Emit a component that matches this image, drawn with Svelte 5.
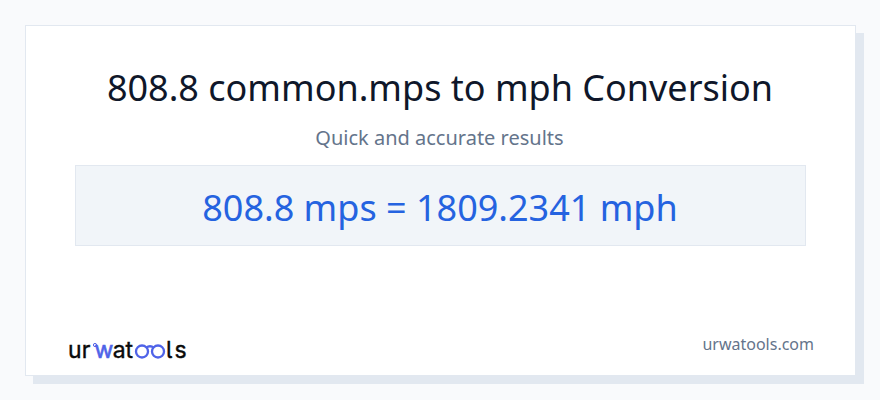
<script>
    export let title = "808.8 common.mps to mph Conversion";
    export let subtitle = "Quick and accurate results";
    export let result = "808.8 mps = 1809.2341 mph";
    export let site = "urwatools.com";
</script>

<div class="page">
    <main class="card">
        <h1>{title}</h1>
        <p class="subtitle">{subtitle}</p>
        <div class="result">{result}</div>
        <footer>
            <svg class="logo" viewBox="0 0 124 40" role="img" aria-label="urwatools">
                <g class="letters">
                    <text x="0" y="28">u</text>
                    <text x="13.700" y="28">r</text>
                    <text class="accent" x="26.500" y="28">w</text>
                    <text x="44.800" y="28">a</text>
                    <text x="57.600" y="28">t</text>
                    <text x="98" y="28">l</text>
                    <text x="106.600" y="28">s</text>
                </g>
                <!-- glasses -->
                <g class="lenses">
                    <circle cx="74" cy="21.500" r="6" />
                    <circle cx="90" cy="21.500" r="6" />
                    <path d="M78 18q4-3.500 8 0" />
                </g>
                <circle class="dot" cx="27" cy="15" r="1.600" />
            </svg>
            <span class="site">{site}</span>
        </footer>
    </main>
</div>

<style>
    :global(body) {
        margin: 0;
        background: #f9fafc;
    }

    .page {
        box-sizing: border-box;
        height: 400px;
        padding: 25px 24px 24px 25px;
        font-family: "Noto Sans", sans-serif;
    }

    .card {
        box-sizing: border-box;
        display: flex;
        flex-direction: column;
        height: 351px;
        padding: 36px 49px 0;
        background: #fff;
        border: 1px solid #e2e8f0;
        box-shadow: 8px 8px 0 #e2e8f0;
        text-align: center;
    }

    h1 {
        margin: 0;
        padding-right: 1px;
        font-size: 36px;
        font-weight: 400;
        line-height: 52px;
        color: #0f172a;
    }

    .subtitle {
        margin: 10px 0 13px;
        padding-right: 2px;
        font-size: 20px;
        line-height: 28px;
        color: #64748b;
    }

    .result {
        box-sizing: border-box;
        height: 81px;
        padding-right: 1px;
        border: 1px solid #e2e8f0;
        background: #f1f5f9;
        font-size: 36px;
        line-height: 84px;
        color: #2563e0;
    }

    footer {
        display: flex;
        justify-content: space-between;
        margin: 84px -8px 0 -7px;
    }

    .logo {
        width: 124px;
        height: 40px;
    }

    .letters {
        font-family: Inter, sans-serif;
        font-size: 23px;
        font-feature-settings: "cv05";
        fill: #0a0a0a;
        stroke: #0a0a0a;
        stroke-width: 0.4;
    }

    .letters .accent {
        fill: #4f63e8;
        stroke: #4f63e8;
        stroke-width: 0.6;
    }

    .lenses {
        fill: none;
        stroke: #4f63e8;
        stroke-width: 2.3;
    }

    .dot {
        fill: none;
        stroke: #4f63e8;
        stroke-width: 1;
    }

    .site {
        padding-top: 6px;
        font-size: 16px;
        line-height: 16px;
        color: #64748b;
    }
</style>
